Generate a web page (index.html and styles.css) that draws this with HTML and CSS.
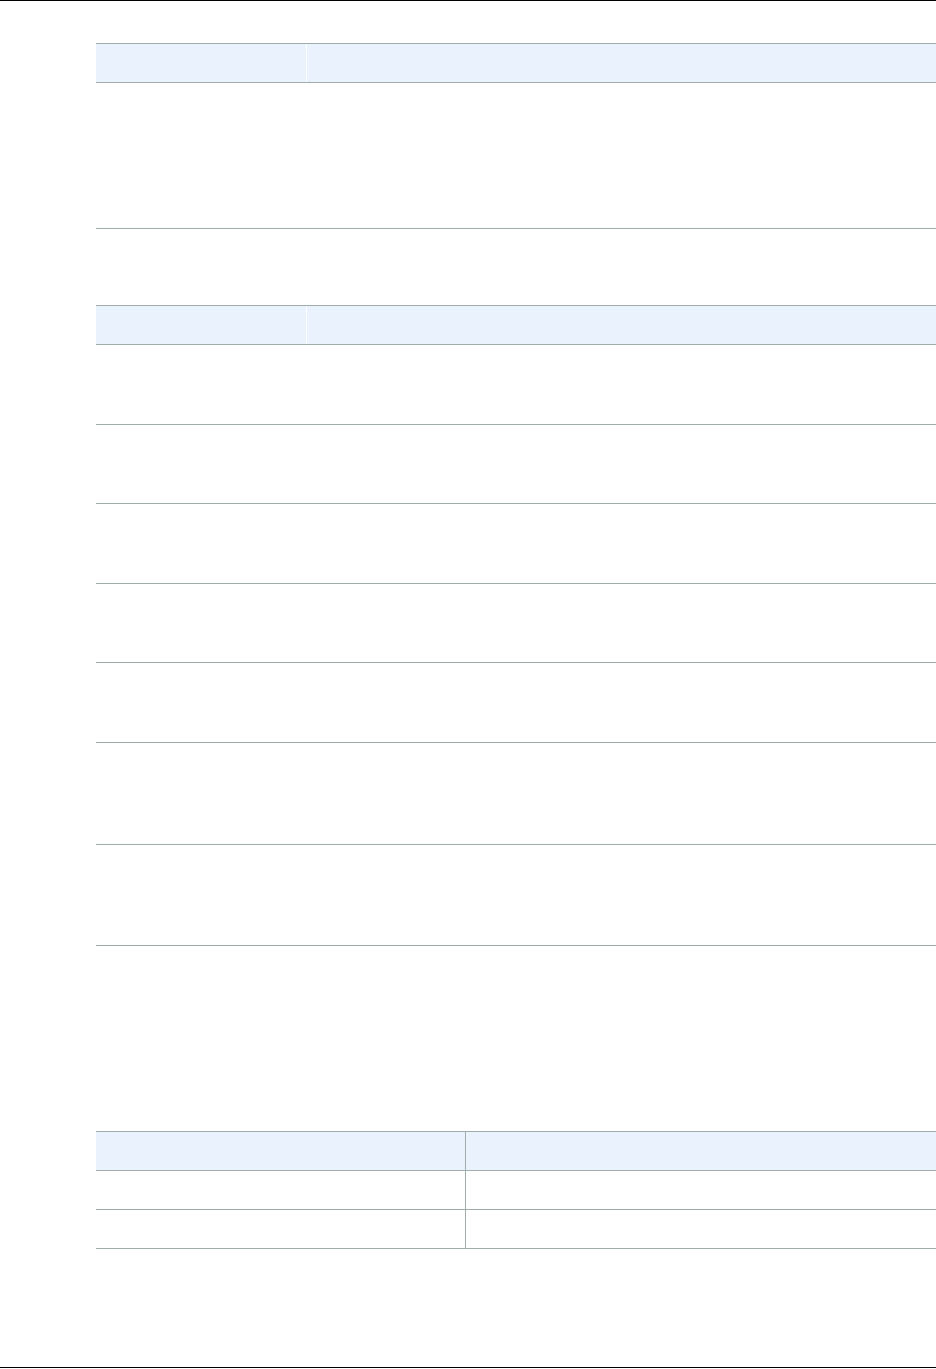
FILE: index.html
```html
<!DOCTYPE html>
<html lang="en">
<head>
    <meta charset="UTF-8">
    <meta name="viewport" content="width=device-width, initial-scale=1.0">
    <title>Reference Tables</title>
    <link rel="stylesheet" href="styles.css">
</head>
<body>
    <div class="page">
        <div class="rule"></div>

        <div class="table table-first">
            <div class="row head split">
                <div class="cell"></div>
                <div class="cell"></div>
            </div>
            <div class="row split h-145">
                <div class="cell"></div>
                <div class="cell"></div>
            </div>
        </div>

        <div class="table table-second">
            <div class="row head split">
                <div class="cell"></div>
                <div class="cell"></div>
            </div>
            <div class="row split h-79"><div class="cell"></div><div class="cell"></div></div>
            <div class="row split h-78"><div class="cell"></div><div class="cell"></div></div>
            <div class="row split h-79"><div class="cell"></div><div class="cell"></div></div>
            <div class="row split h-78"><div class="cell"></div><div class="cell"></div></div>
            <div class="row split h-79"><div class="cell"></div><div class="cell"></div></div>
            <div class="row split h-101"><div class="cell"></div><div class="cell"></div></div>
            <div class="row split h-100"><div class="cell"></div><div class="cell"></div></div>
        </div>

        <div class="table table-third">
            <div class="row head half">
                <div class="cell"></div>
                <div class="cell"></div>
            </div>
            <div class="row half h-38"><div class="cell"></div><div class="cell"></div></div>
            <div class="row half h-38"><div class="cell"></div><div class="cell"></div></div>
        </div>

        <div class="rule rule-bottom"></div>
    </div>
</body>
</html>
```

FILE: styles.css
```css
/* Reset */
* {
    margin: 0;
    padding: 0;
    box-sizing: border-box;
}
body {
    font-family: 'Liberation Sans', Arial, sans-serif;
    background: #fff;
    color: #000;
}
.page {
    width: 936px;
    height: 1369px;
    overflow: hidden;
}
.rule {
    height: 1px;
    background: #000;
}
.rule-bottom {
    margin-top: 118px;
}

/* Tables */
.table {
    margin-left: 96px;
    width: 840px;
    border-top: 1px solid #a0adab;
}
.table-first {
    margin-top: 42px;
}
.table-second {
    margin-top: 76px;
}
.table-third {
    margin-top: 185px;
}
.row {
    display: grid;
    border-bottom: 1px solid #a0adab;
}
.row.split {
    grid-template-columns: 210px 1fr;
}
.row.half {
    grid-template-columns: 369px 1fr;
}
.row.head {
    height: 39px;
    background: #eaf2fd;
}
.row.head.split .cell + .cell {
    border-left: 1px solid #fff;
}
.row.half .cell + .cell {
    border-left: 1px solid #a0adab;
}

/* Row heights (content + bottom rule) */
.h-38 { height: 39px; }
.h-78 { height: 79px; }
.h-79 { height: 80px; }
.h-100 { height: 101px; }
.h-101 { height: 102px; }
.h-145 { height: 146px; }
```
